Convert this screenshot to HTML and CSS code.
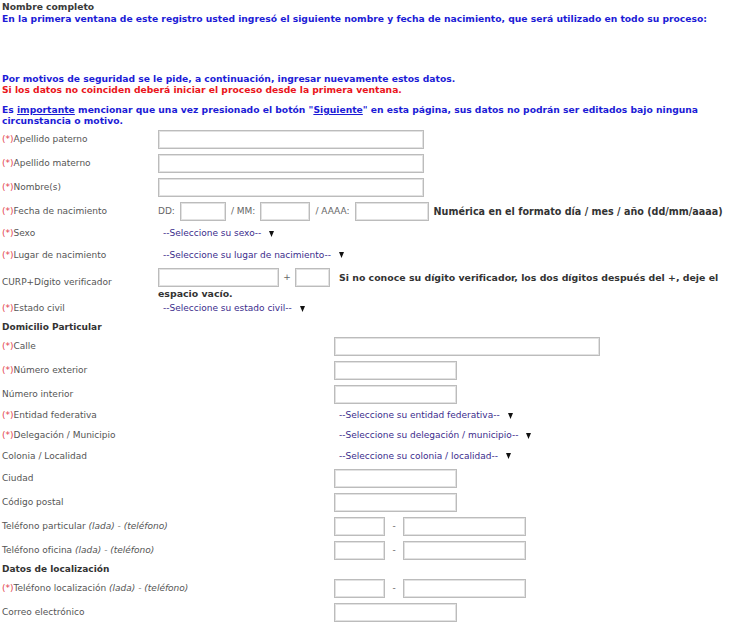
FILE: index.html
```html
<!DOCTYPE html>
<html lang="es">
<head>
<meta charset="utf-8">
<title>Nombre completo</title>
<link rel="stylesheet" href="styles.css">
</head>
<body>
<div class="page">
  <div class="intro">
    <p class="title">Nombre completo</p>
    <p class="blue first">En la primera ventana de este registro usted ingresó el siguiente nombre y fecha de nacimiento, que será utilizado en todo su proceso:</p>
    <p class="blue motivos">Por motivos de seguridad se le pide, a continuación, ingresar nuevamente estos datos.</p>
    <p class="red">Si los datos no coinciden deberá iniciar el proceso desde la primera ventana.</p>
    <p class="blue importante"><span class="line">Es <span class="ul">importante</span> mencionar que una vez presionado el botón "<span class="ul">Siguiente</span>" en esta página, sus datos no podrán ser editados bajo ninguna</span><span class="line">circunstancia o motivo.</span></p>
  </div>

  <div class="section s1">
    <div class="row h24"><span class="label"><em class="req">(*)</em>Apellido paterno</span><span class="field"><span class="input w266"></span></span></div>
    <div class="row h24"><span class="label"><em class="req">(*)</em>Apellido materno</span><span class="field"><span class="input w266"></span></span></div>
    <div class="row h24"><span class="label"><em class="req">(*)</em>Nombre(s)</span><span class="field"><span class="input w266"></span></span></div>
    <div class="row h24"><span class="label"><em class="req">(*)</em>Fecha de nacimiento</span>
      <span class="field date">
        <span class="dl">DD:</span><span class="input w46"></span>
        <span class="dl sep">/ MM:</span><span class="input w50"></span>
        <span class="dl sep">/ AAAA:</span><span class="input w74"></span>
        <b class="hint">Numérica en el formato día / mes / año (dd/mm/aaaa)</b>
      </span>
    </div>
    <div class="row h21"><span class="label"><em class="req">(*)</em>Sexo</span><span class="field"><span class="select">--Seleccione su sexo--<svg class="caret" width="5" height="6" viewBox="0 0 5 6"><path d="M0 0H5L2.5 6Z"/></svg></span></span></div>
    <div class="row h22"><span class="label"><em class="req">(*)</em>Lugar de nacimiento</span><span class="field"><span class="select">--Seleccione su lugar de nacimiento--<svg class="caret" width="5" height="6" viewBox="0 0 5 6"><path d="M0 0H5L2.5 6Z"/></svg></span></span></div>
    <div class="row h32"><span class="label">CURP+Dígito verificador</span>
      <span class="field curp"><span class="line"><span class="input w121"></span><span class="plus">+</span><span class="input w35"></span><b class="hint">Si no conoce su dígito verificador, los dos dígitos después del +, deje el</b></span><b class="hint line">espacio vacío.</b></span>
    </div>
    <div class="row h21"><span class="label"><em class="req">(*)</em>Estado civil</span><span class="field"><span class="select">--Seleccione su estado civil--<svg class="caret" width="5" height="6" viewBox="0 0 5 6"><path d="M0 0H5L2.5 6Z"/></svg></span></span></div>
  </div>

  <div class="section s2">
    <div class="row h16 heading">Domicilio Particular</div>
    <div class="row h23"><span class="label"><em class="req">(*)</em>Calle</span><span class="field"><span class="input w266"></span></span></div>
    <div class="row h24"><span class="label"><em class="req">(*)</em>Número exterior</span><span class="field"><span class="input w123"></span></span></div>
    <div class="row h24"><span class="label">Número interior</span><span class="field"><span class="input w123"></span></span></div>
    <div class="row h19"><span class="label"><em class="req">(*)</em>Entidad federativa</span><span class="field"><span class="select">--Seleccione su entidad federativa--<svg class="caret" width="5" height="6" viewBox="0 0 5 6"><path d="M0 0H5L2.5 6Z"/></svg></span></span></div>
    <div class="row h21"><span class="label"><em class="req">(*)</em>Delegación / Municipio</span><span class="field"><span class="select">--Seleccione su delegación / municipio--<svg class="caret" width="5" height="6" viewBox="0 0 5 6"><path d="M0 0H5L2.5 6Z"/></svg></span></span></div>
    <div class="row h20"><span class="label">Colonia / Localidad</span><span class="field"><span class="select">--Seleccione su colonia / localidad--<svg class="caret" width="5" height="6" viewBox="0 0 5 6"><path d="M0 0H5L2.5 6Z"/></svg></span></span></div>
    <div class="row h24"><span class="label">Ciudad</span><span class="field"><span class="input w123"></span></span></div>
    <div class="row h24"><span class="label">Código postal</span><span class="field"><span class="input w123"></span></span></div>
    <div class="row h24"><span class="label">Teléfono particular <i>(lada) - (teléfono)</i></span><span class="field"><span class="input w51"></span><span class="dash">-</span><span class="input w123"></span></span></div>
    <div class="row h24"><span class="label">Teléfono oficina <i>(lada) - (teléfono)</i></span><span class="field"><span class="input w51"></span><span class="dash">-</span><span class="input w123"></span></span></div>
    <div class="row h14 heading">Datos de localización</div>
    <div class="row h24"><span class="label"><em class="req">(*)</em>Teléfono localización <i>(lada) - (teléfono)</i></span><span class="field"><span class="input w51"></span><span class="dash">-</span><span class="input w123"></span></span></div>
    <div class="row h24"><span class="label">Correo electrónico</span><span class="field"><span class="input w123"></span></span></div>
  </div>
</div>
</body>
</html>
```

FILE: styles.css
```css
html, body {
  margin: 0;
  padding: 0;
  background: #ffffff;
}

body {
  font-family: "DejaVu Sans", Verdana, sans-serif;
  font-size: 9px;
  line-height: 11px;
  color: #555555;
}

.page {
  padding: 1px 2px 0;
}

.intro p {
  margin: 0;
  font-weight: bold;
  font-size: 9.2px;
}

.intro .line {
  display: block;
  white-space: nowrap;
}

.intro .title {
  color: #3a3a3a;
}

.intro .first {
  margin-top: 1px;
}

.intro .blue {
  color: #1c1cd6;
}

.intro .motivos {
  margin-top: 49px;
}

.intro .red {
  color: #ea1520;
}

.intro .importante {
  margin-top: 9px;
}

.intro .ul {
  text-decoration: underline;
}

.section .row {
  display: grid;
  align-items: center;
}

.s1 {
  margin-top: 1px;
}

.s1 .row {
  grid-template-columns: 156px 1fr;
}

.s2 .row {
  grid-template-columns: 332px 1fr;
}

.h14 { height: 14px; }
.h16 { height: 16px; }
.h19 { height: 19px; }
.h20 { height: 20px; }
.h21 { height: 21px; }
.h22 { height: 22px; }
.h23 { height: 23px; }
.h24 { height: 24px; }
.h32 { height: 32px; }

.heading {
  font-weight: bold;
  color: #333333;
}

.label {
  white-space: nowrap;
}

.req {
  font-style: normal;
  color: #e2404c;
}

.label i {
  font-style: italic;
}

.field {
  display: flex;
  align-items: center;
}

.input {
  display: inline-block;
  box-sizing: border-box;
  height: 19px;
  border: 1px solid #bcbcbc;
  box-shadow: inset 0 0 0 1px #e2e2e2;
  background: #ffffff;
  flex: none;
}

.w35 { width: 35px; }
.w46 { width: 46px; }
.w50 { width: 50px; }
.w51 { width: 51px; }
.w74 { width: 74px; }
.w121 { width: 121px; }
.w123 { width: 123px; }
.w266 { width: 266px; }

.date .dl {
  color: #666666;
  margin-right: 5px;
}

.date .sep {
  margin-left: 5px;
}

.hint {
  color: #333333;
  font-weight: bold;
  font-size: 9.4px;
}

.date .hint {
  margin-left: 5px;
  white-space: nowrap;
  font-size: 9.6px;
}

.curp {
  display: flex;
  flex-direction: column;
  align-items: flex-start;
  padding-top: 2px;
  align-self: start;
}

.curp .line {
  display: flex;
  align-items: center;
  white-space: nowrap;
}

.curp .plus {
  display: inline-block;
  width: 16px;
  text-align: center;
  color: #666666;
}

.curp .line .hint {
  margin-left: 9px;
}

.curp .hint.line {
  display: block;
  margin-top: 1px;
}

.dash {
  display: inline-block;
  width: 18px;
  text-align: center;
  color: #666666;
}

.select {
  display: inline-flex;
  align-items: center;
  color: #3b2c8c;
  padding-left: 5px;
}

.caret {
  margin-left: 8px;
  fill: #111111;
}
```
